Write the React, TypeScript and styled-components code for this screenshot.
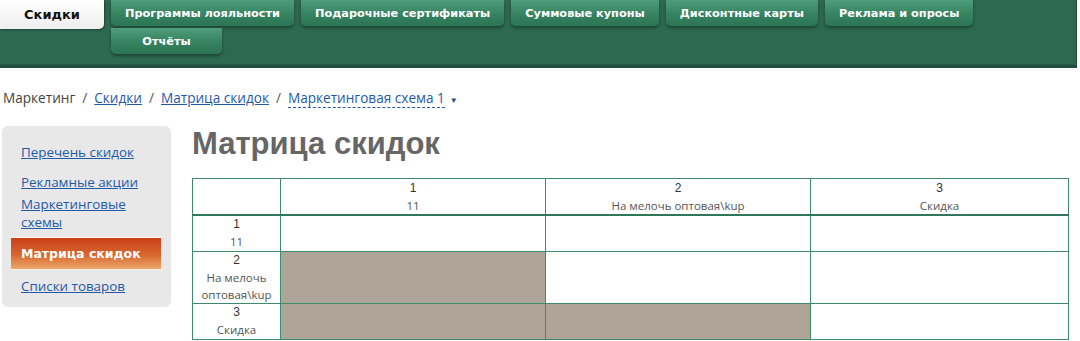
import React from 'react';
import { styled, createGlobalStyle } from 'styled-components';

const GlobalStyle = createGlobalStyle`
  html, body {
    margin: 0;
    padding: 0;
    background: #ffffff;
  }
  body {
    font-family: "Open Sans", "Liberation Sans", sans-serif;
    color: #333;
  }
`;

const topItems = [
  'Программы лояльности',
  'Подарочные сертификаты',
  'Суммовые купоны',
  'Дисконтные карты',
  'Реклама и опросы',
  'Отчёты',
];

// gap = space under the item, as in the reference menu
const sideItems = [
  { label: 'Перечень скидок', gap: 12 },
  { label: 'Рекламные акции', gap: 4 },
  { label: 'Маркетинговые схемы', gap: 6 },
  { label: 'Матрица скидок', gap: 7, active: true },
  { label: 'Списки товаров', gap: 0 },
];

const columns = [
  { num: '1', name: '11' },
  { num: '2', name: 'На мелочь оптовая\\kup' },
  { num: '3', name: 'Скидка' },
];

const rows = [
  { num: '1', name: '11', blocked: 0 },
  { num: '2', name: 'На мелочь оптовая\\kup', blocked: 1 },
  { num: '3', name: 'Скидка', blocked: 2 },
];

export default function App() {
  return (
    <Page>
      <GlobalStyle />
      <Header>
        <SectionTab>Скидки</SectionTab>
        <TopNav>
          {topItems.map((item) => (
            <TopButton key={item}>{item}</TopButton>
          ))}
        </TopNav>
      </Header>

      <Breadcrumbs>
        <CrumbText>Маркетинг</CrumbText>
        <Sep>/</Sep>
        <CrumbLink>Скидки</CrumbLink>
        <Sep>/</Sep>
        <CrumbLink>Матрица скидок</CrumbLink>
        <Sep>/</Sep>
        <CrumbDropdown>Маркетинговая схема 1</CrumbDropdown>
        <Caret>▼</Caret>
      </Breadcrumbs>

      <Main>
        <Sidebar>
          {sideItems.map((item) =>
            item.active ? (
              <SideActive key={item.label} $gap={item.gap}>
                {item.label}
              </SideActive>
            ) : (
              <SideLink key={item.label} $gap={item.gap}>
                {item.label}
              </SideLink>
            )
          )}
        </Sidebar>

        <Content>
          <Title>Матрица скидок</Title>
          <Matrix>
            <colgroup>
              <col style={{ width: 88 }} />
              <col style={{ width: 265 }} />
              <col style={{ width: 265 }} />
              <col />
            </colgroup>
            <thead>
              <tr>
                <HeadCell />
                {columns.map((c) => (
                  <HeadCell key={c.num}>
                    <Num>{c.num}</Num>
                    <Name>{c.name}</Name>
                  </HeadCell>
                ))}
              </tr>
            </thead>
            <tbody>
              {rows.map((r) => (
                <tr key={r.num}>
                  <RowHead>
                    <Num>{r.num}</Num>
                    <Name>{r.name}</Name>
                  </RowHead>
                  {columns.map((c, i) => (
                    <Cell key={c.num} $blocked={i < r.blocked} />
                  ))}
                </tr>
              ))}
            </tbody>
          </Matrix>
        </Content>
      </Main>
    </Page>
  );
}

const Page = styled.div`
  width: 1080px;
  height: 341px;
  overflow: hidden;
`;

const Header = styled.div`
  width: 1077px;
  height: 68px;
  box-sizing: border-box;
  display: flex;
  align-items: flex-start;
  background: #2d6850;
  border-bottom: 3px solid #224f3d;
  border-right: 1px solid #1f4a39;
  box-shadow: inset 0 -1px 0 #285c47;
`;

const SectionTab = styled.div`
  width: 104px;
  height: 29px;
  flex-shrink: 0;
  display: flex;
  align-items: center;
  justify-content: center;
  background: linear-gradient(#ffffff, #eeeeee);
  border-radius: 0 0 5px 0;
  box-shadow: 1px 1px 2px rgba(0, 0, 0, 0.35);
  font-family: "DejaVu Sans", "Liberation Sans", sans-serif;
  font-weight: bold;
  font-size: 13px;
  color: #111;
`;

const TopNav = styled.div`
  display: flex;
  flex-wrap: wrap;
  gap: 2px 7px;
  width: 900px;
  padding-left: 7px;
`;

const TopButton = styled.div`
  height: 26px;
  padding: 0 14px;
  display: flex;
  align-items: center;
  justify-content: center;
  min-width: 83px;
  background: linear-gradient(#4f9d7b, #34805f 60%, #2c7555);
  border-radius: 0 0 5px 5px;
  box-shadow: 0 2px 3px rgba(0, 0, 0, 0.35);
  font-family: "DejaVu Sans", "Liberation Sans", sans-serif;
  font-weight: bold;
  font-size: 11.3px;
  color: #ffffff;
  white-space: nowrap;
`;

const Breadcrumbs = styled.div`
  display: flex;
  align-items: baseline;
  padding: 20px 0 0 3px;
  height: 36px;
  box-sizing: border-box;
  font-size: 13.6px;
  color: #444;
`;

const CrumbText = styled.span``;

const Sep = styled.span`
  margin: 0 7px;
  color: #555;
`;

const CrumbLink = styled.a`
  color: #1f5aa6;
  text-decoration: underline;
`;

const CrumbDropdown = styled.span`
  color: #1f5aa6;
  border-bottom: 1px dashed #1f5aa6;
`;

const Caret = styled.span`
  font-size: 8px;
  color: #1f4e8c;
  margin-left: 5px;
`;

const Main = styled.div`
  display: flex;
  align-items: flex-start;
  padding: 22px 0 0 2px;
  gap: 21px;
`;

const Sidebar = styled.div`
  width: 169px;
  height: 181px;
  box-sizing: border-box;
  background: #e8e8e8;
  border-radius: 6px;
  padding: 17px 0 0 9px;
  display: flex;
  flex-direction: column;
`;

const SideLink = styled.a<{ $gap: number }>`
  display: block;
  padding: 0 24px 0 10px;
  margin-bottom: ${(p) => p.$gap}px;
  font-size: 13.4px;
  line-height: 18px;
  color: #1f5aa6;
  text-decoration: underline;
`;

const SideActive = styled.div<{ $gap: number }>`
  width: 150px;
  height: 33px;
  box-sizing: border-box;
  margin-bottom: ${(p) => p.$gap}px;
  padding-left: 10px;
  display: flex;
  align-items: center;
  background: linear-gradient(#c8401b, #d9672e 55%, #eba86c);
  border-top: 1px solid #fff3ea;
  border-bottom: 1px solid #fff3ea;
  font-family: "DejaVu Sans", "Liberation Sans", sans-serif;
  font-weight: bold;
  font-size: 12.5px;
  color: #ffffff;
`;

const Content = styled.div`
  display: flex;
  flex-direction: column;
`;

const Title = styled.h1`
  margin: 0 0 16px 0;
  font-family: "Liberation Sans", Arial, sans-serif;
  font-weight: bold;
  font-size: 31px;
  line-height: 36px;
  color: #666;
`;

const Matrix = styled.table`
  width: 877px;
  border-collapse: collapse;
  table-layout: fixed;
`;

const HeadCell = styled.th`
  height: 35px;
  padding: 0;
  border: 1px solid #3e8b6b;
  border-bottom: 2px solid #2f7758;
  text-align: center;
  vertical-align: middle;
  font-weight: normal;
`;

const RowHead = styled.td`
  padding: 0;
  border: 1px solid #3e8b6b;
  text-align: center;
  vertical-align: top;
  height: 35px;
`;

const Cell = styled.td<{ $blocked: boolean }>`
  padding: 0;
  border: 1px solid #3e8b6b;
  background: ${(p) => (p.$blocked ? '#aea598' : '#ffffff')};
`;

const Num = styled.div`
  font-family: "Liberation Sans", Arial, sans-serif;
  font-size: 12px;
  line-height: 17px;
  color: #333;
`;

const Name = styled.div`
  font-size: 11.5px;
  line-height: 17px;
  color: #555;
`;
